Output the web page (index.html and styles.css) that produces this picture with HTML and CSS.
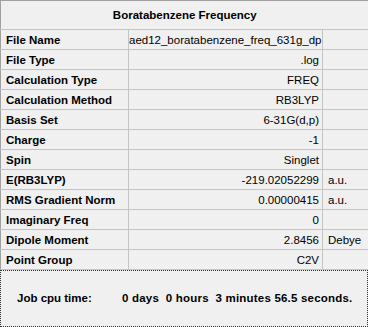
FILE: index.html
```html
<!DOCTYPE html>
<html>
<head>
<meta charset="utf-8">
<link rel="stylesheet" href="styles.css">
</head>
<body>
<div class="panel">
  <table class="summary">
    <colgroup>
      <col class="col-label">
      <col class="col-value">
      <col class="col-unit">
    </colgroup>
    <tr><th class="title" colspan="3">Boratabenzene Frequency</th></tr>
    <tr><td class="label">File Name</td><td class="value">aed12_boratabenzene_freq_631g_dp</td><td class="unit"></td></tr>
    <tr><td class="label">File Type</td><td class="value">.log</td><td class="unit"></td></tr>
    <tr><td class="label">Calculation Type</td><td class="value">FREQ</td><td class="unit"></td></tr>
    <tr><td class="label">Calculation Method</td><td class="value">RB3LYP</td><td class="unit"></td></tr>
    <tr><td class="label">Basis Set</td><td class="value">6-31G(d,p)</td><td class="unit"></td></tr>
    <tr><td class="label">Charge</td><td class="value">-1</td><td class="unit"></td></tr>
    <tr><td class="label">Spin</td><td class="value">Singlet</td><td class="unit"></td></tr>
    <tr><td class="label">E(RB3LYP)</td><td class="value">-219.02052299</td><td class="unit">a.u.</td></tr>
    <tr><td class="label">RMS Gradient Norm</td><td class="value">0.00000415</td><td class="unit">a.u.</td></tr>
    <tr><td class="label">Imaginary Freq</td><td class="value">0</td><td class="unit"></td></tr>
    <tr><td class="label">Dipole Moment</td><td class="value">2.8456</td><td class="unit">Debye</td></tr>
    <tr><td class="label">Point Group</td><td class="value">C2V</td><td class="unit"></td></tr>
  </table>
  <div class="cpu">
    <span class="cpu-label">Job cpu time:</span><span class="cpu-value">0 days  0 hours  3 minutes 56.5 seconds.</span>
  </div>
</div>
</body>
</html>
```
FILE: styles.css
```css
html, body {
  margin: 0;
  padding: 0;
  background: #f0f0f0;
}

.panel {
  width: 368px;
  height: 327px;
  font-family: "Liberation Sans", Arial, sans-serif;
  font-size: 11.5px;
  color: #000;
  background: #f0f0f0;
}

.summary {
  border-collapse: collapse;
  width: 368px;
  table-layout: fixed;
}

.col-label { width: 128px; }
.col-value { width: 194px; }
.col-unit  { width: 46px; }

.summary th,
.summary td {
  padding: 0;
  height: 19px;
  border-bottom: 1px solid #c4c4c4;
  white-space: nowrap;
  overflow: hidden;
}

.summary .title {
  height: 28px;
  border-top: 1px solid #a0a0a0;
  border-left: 1px solid #a0a0a0;
  font-weight: bold;
  text-align: center;
}

.summary .label {
  padding-left: 5px;
  font-weight: bold;
  border-left: 1px solid #a0a0a0;
  border-right: 1px solid #c4c4c4;
}

.summary .value {
  padding-right: 3px;
  text-align: right;
  border-right: 1px solid #c4c4c4;
}

.summary .unit {
  padding-left: 5px;
}

.cpu {
  box-sizing: border-box;
  height: 57px;
  border: 1px dotted #303030;
  display: flex;
  align-items: center;
  padding: 0 0 2px 16px;
  font-weight: bold;
  white-space: pre;
}

.cpu-label {
  width: 105px;
}

.cpu-value {
  letter-spacing: 0.2px;
}
```
